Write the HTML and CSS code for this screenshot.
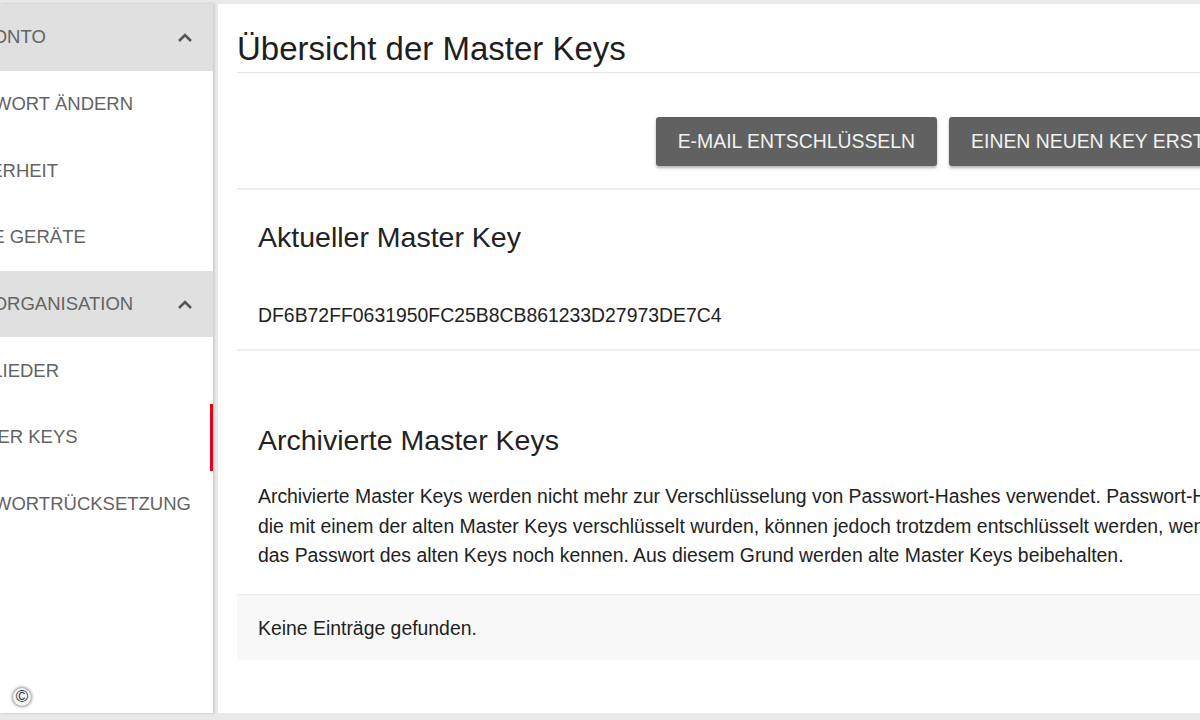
FILE: index.html
```html
<!DOCTYPE html>
<html lang="de">
<head>
<meta charset="utf-8">
<title>Übersicht der Master Keys</title>
<link rel="stylesheet" href="styles.css">
</head>
<body>
<div class="layout">
  <nav class="sidebar">
    <div class="nav-row nav-head"><span class="label head-label">Mein Konto</span>
      <svg class="chev" width="16" height="10" viewBox="0 0 16 10"><polyline points="2,9 8,3 14,9" fill="none" stroke="#555" stroke-width="2.6"/></svg></div>
    <div class="nav-row"><span class="label">Passwort ändern</span></div>
    <div class="nav-row"><span class="label">Sicherheit</span></div>
    <div class="nav-row"><span class="label">Meine Geräte</span></div>
    <div class="nav-row nav-head"><span class="label head-label">Meine Organisation</span>
      <svg class="chev" width="16" height="10" viewBox="0 0 16 10"><polyline points="2,9 8,3 14,9" fill="none" stroke="#555" stroke-width="2.6"/></svg></div>
    <div class="nav-row"><span class="label">Mitglieder</span></div>
    <div class="nav-row active"><span class="label">Master Keys</span></div>
    <div class="nav-row"><span class="label">Passwortrücksetzung</span></div>
  </nav>
  <main class="main">
    <h1 class="page-title">Übersicht der Master Keys</h1>
    <div class="toolbar">
      <button class="btn">E-Mail entschlüsseln</button>
      <button class="btn">Einen neuen Key erstellen</button>
    </div>
    <section class="card current">
      <h2 class="card-title">Aktueller Master Key</h2>
      <div class="key">DF6B72FF0631950FC25B8CB861233D27973DE7C4</div>
    </section>
    <section class="card archived">
      <h2 class="card-title">Archivierte Master Keys</h2>
      <p class="desc">Archivierte Master Keys werden nicht mehr zur Verschlüsselung von Passwort-Hashes verwendet. Passwort-Hashes,<br>die mit einem der alten Master Keys verschlüsselt wurden, können jedoch trotzdem entschlüsselt werden, wenn Sie<br>das Passwort des alten Keys noch kennen. Aus diesem Grund werden alte Master Keys beibehalten.</p>
    </section>
    <div class="empty">Keine Einträge gefunden.</div>
  </main>
</div>
<span class="watermark">©</span>
</body>
</html>
```
FILE: styles.css
```css
html, body {
  margin: 0;
  padding: 0;
}
body {
  width: 1200px;
  height: 720px;
  overflow: hidden;
  background: #e9e9e9;
  font-family: "Liberation Sans", Arial, sans-serif;
  color: #222;
  position: relative;
}
.layout {
  display: flex;
  gap: 5px;
  padding-top: 4px;
  height: 709px;
}
.sidebar {
  width: 213px;
  flex-shrink: 0;
  background: #fff;
  overflow: hidden;
  box-shadow: 1px 0 3px rgba(0,0,0,0.18);
}
.nav-row {
  height: 66.7px;
  display: flex;
  align-items: center;
  justify-content: space-between;
  padding-right: 20px;
  box-sizing: border-box;
  font-size: 18.5px;
  color: #636363;
  text-transform: uppercase;
  white-space: nowrap;
}
.nav-head {
  background: #e0e0e0;
}
.label {
  margin-left: -54px;
}
.head-label {
  margin-left: -71px;
}
.chev {
  flex-shrink: 0;
}
.active {
  border-right: 3px solid #e2001a;
  padding-right: 17px;
}
.main {
  width: 1051px;
  flex-shrink: 0;
  background: #fff;
  padding: 0 19px;
}
.page-title {
  margin: 0;
  font-size: 33px;
  line-height: 38px;
  font-weight: normal;
  color: #1e1e1e;
  padding: 25.6px 0 4px;
  border-bottom: 1px solid #e6e6e6;
  white-space: nowrap;
}
.toolbar {
  display: flex;
  justify-content: flex-end;
  gap: 12px;
  padding: 44.4px 0 22px;
  border-bottom: 2px solid #eeeeee;
}
.btn {
  height: 49px;
  padding: 0 22px;
  border: none;
  border-radius: 3px;
  background: #616161;
  color: #f2f2f2;
  font-family: "Liberation Sans", Arial, sans-serif;
  font-size: 19.4px;
  text-transform: uppercase;
  white-space: nowrap;
  box-shadow: 0 2px 3px rgba(0,0,0,0.3);
}
.card {
  padding: 0 21px;
}
.card-title {
  margin: 0;
  font-size: 28.5px;
  line-height: 34px;
  font-weight: normal;
  color: #222;
  white-space: nowrap;
}
.current {
  padding-top: 30px;
  padding-bottom: 19px;
  border-bottom: 2px solid #eeeeee;
}
.key {
  margin-top: 46.8px;
  font-size: 19.4px;
  line-height: 29px;
  color: #222;
}
.archived {
  padding-top: 72px;
}
.desc {
  margin: 25.5px 0 23px;
  font-size: 19.4px;
  line-height: 29.5px;
  color: #222;
  white-space: nowrap;
}
.empty {
  border-top: 1px solid #ebebeb;
  background: #f8f8f8;
  padding: 19px 21px 17px;
  font-size: 19.4px;
  line-height: 29px;
  color: #222;
}
.watermark {
  position: absolute;
  left: 13px;
  top: 688px;
  width: 18px;
  height: 18px;
  border-radius: 50%;
  background: #f4f4f4;
  box-shadow: 0 0 3px 1px rgba(0,0,0,0.45);
  display: flex;
  align-items: center;
  justify-content: center;
  font-size: 17px;
  line-height: 18px;
  color: #333;
}
```
